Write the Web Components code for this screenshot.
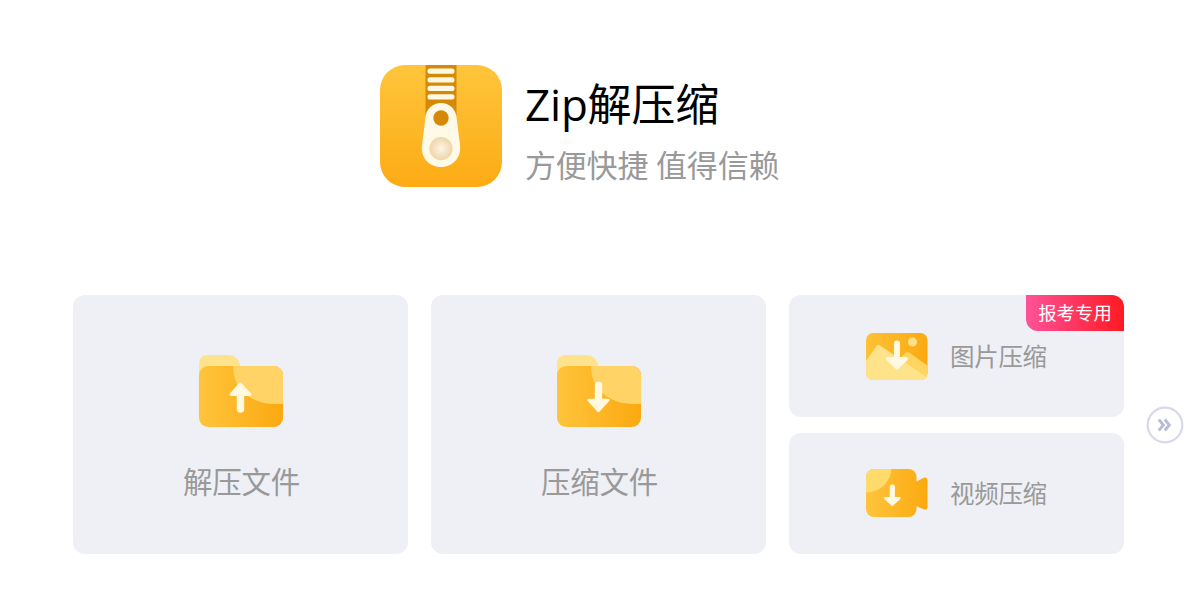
<!DOCTYPE html>
<html lang="zh-CN">
<head>
<meta charset="utf-8">
<title>Zip解压缩</title>
<style>
	body {
		margin: 0;
		background: #fff;
		font-family: "Open Sans", "Noto Sans CJK SC", sans-serif;
	}
</style>
</head>
<body>
<zip-home></zip-home>

<script>
	// drawings used by <zip-icon name="...">
	const icons = {
		logo: {
			width: 122, height: 122,
			body: `
				<defs>
					<linearGradient id="bg" x1="0" y1="0" x2="0" y2="1"><stop offset="0" stop-color="#ffc53c"/><stop offset="1" stop-color="#fcab14"/></linearGradient>
					<radialGradient id="knob"><stop offset="0" stop-color="#fcf5e6"/><stop offset="1" stop-color="#efd5a8"/></radialGradient>
				</defs>
				<rect width="122" height="122" rx="25" fill="url(#bg)"/>
				<rect x="45.5" width="31" height="50" fill="#d48a08"/>
				<g fill="#fff9e4">
					<rect x="47.5" y="3.6" width="27" height="5.2" rx="2.6"/>
					<rect x="47.5" y="12.3" width="27" height="5.2" rx="2.6"/>
					<rect x="47.5" y="20.8" width="27" height="5.2" rx="2.6"/>
					<rect x="47.5" y="29.3" width="27" height="5.2" rx="2.6"/>
				</g>
				<path d="M61 38C53 38 46.6 43.5 45.6 51.5L42 80C40.5 92.5 49 102 61 102C73 102 81.5 92.5 80 80L76.4 51.5C75.4 43.5 69 38 61 38Z" fill="#fff9e8"/>
				<circle cx="61" cy="53" r="7.7" fill="#d48a08"/>
				<circle cx="61" cy="83.6" r="11.6" fill="url(#knob)"/>`
		},
		extract: {
			width: 85, height: 73,
			body: folder('<path d="M41.8 27.6L52.3 38.7Q53 40.6 51 40.9H45.2V54.3Q45.2 57.7 41.5 57.7Q37.8 57.7 37.8 54.3V40.9H32Q30 40.6 30.7 38.7L40.5 27.6Q41.2 27 41.8 27.6Z" fill="#fff9e2"/>')
		},
		compress: {
			width: 85, height: 73,
			body: folder('<path d="M37.8 30Q37.8 26.8 41.5 26.8Q45.2 26.8 45.2 30V43.7H51Q53.4 44 52.3 46L42.2 57Q41.5 57.7 40.8 57L30.7 46Q29.6 44 32 43.7H37.8Z" fill="#fff9e2"/>')
		},
		image: {
			width: 62, height: 47,
			body: `
				<defs>
					<linearGradient id="bg"><stop offset="0" stop-color="#ffc136"/><stop offset="1" stop-color="#fba910"/></linearGradient>
					<clipPath id="clip"><rect width="61.5" height="47" rx="7"/></clipPath>
				</defs>
				<g clip-path="url(#clip)">
					<rect width="62" height="47" fill="url(#bg)"/>
					<path d="M20 37L40 19.5Q41.5 18.5 43 19.5L62 33V47H20Z" fill="#ffd561"/>
					<path d="M0 28L10.8 12.5Q12.3 11 14 12.4L62 45V47H0Z" fill="#ffe38a"/>
				</g>
				<circle cx="46.5" cy="9" r="4.5" fill="#ffe08a"/>
				<path d="M28 10Q28 7.4 31 7.4Q34 7.4 34 10V24H40Q43 24.5 41.5 27L32 36.2Q31 37 30 36.2L20.5 27Q19 24.5 22 24H28Z" fill="#fff9e2"/>`
		},
		video: {
			width: 62, height: 50,
			body: `
				<defs>
					<linearGradient id="bg" gradientUnits="userSpaceOnUse" x1="0" y1="0" x2="62" y2="0"><stop offset="0" stop-color="#ffc43c"/><stop offset="1" stop-color="#fba910"/></linearGradient>
					<clipPath id="clip"><rect width="50.5" height="48" rx="8"/></clipPath>
				</defs>
				<rect width="50.5" height="48" rx="8" fill="url(#bg)"/>
				<path d="M50 13L57.5 8.7Q61.5 7.5 61.5 11V38Q61.5 41.5 57.5 40.3L50 37Z" fill="url(#bg)"/>
				<circle cx="0.5" cy="-1.5" r="25" fill="#ffdb6c" clip-path="url(#clip)"/>
				<path d="M23.7 18Q23.7 15.4 26.3 15.4Q28.9 15.4 28.9 18V28H33.8Q35.4 28.4 34.3 30L27 36.8Q26.3 37.4 25.6 36.8L18.3 30Q17.2 28.4 18.8 28H23.7Z" fill="#fff9e2"/>`
		},
		more: {
			width: 38, height: 38,
			body: `
				<circle cx="19" cy="19" r="17.3" fill="#fff" stroke="#d7d9e8" stroke-width="2.2"/>
				<path d="M12.8 13.5L17.4 19L12.8 24.5M18.8 13.5L23.4 19L18.8 24.5" fill="none" stroke="#b7bbd4" stroke-width="2.8"/>`
		}
	};

	function folder(arrow) {
		return `
			<defs>
				<linearGradient id="bg"><stop offset="0" stop-color="#ffc43c"/><stop offset="1" stop-color="#fba910"/></linearGradient>
				<clipPath id="clip"><rect y="11" width="84" height="61" rx="9"/></clipPath>
			</defs>
			<path d="M0 22V9Q0 0 9 0H29Q38 0 41 9V22Z" fill="#ffe38c"/>
			<rect y="11" width="84" height="61" rx="9" fill="url(#bg)"/>
			<path d="M34.2 11C33 33 52 49 76 49H84V11Z" fill="#ffd365" clip-path="url(#clip)"/>
			${arrow}`;
	}

	class ZipIcon extends HTMLElement {
		constructor() {
			super();
			this.attachShadow({mode: 'open'});
		}

		connectedCallback() {
			const icon = icons[this.getAttribute('name')];
			this.shadowRoot.innerHTML = `
				<style>
					:host { display: block; flex: none; }
					svg { display: block; }
				</style>
				<svg width="${icon.width}" height="${icon.height}" viewBox="0 0 ${icon.width} ${icon.height}">${icon.body}</svg>`;
		}
	}

	class ZipHeader extends HTMLElement {
		constructor() {
			super();
			this.attachShadow({mode: 'open'}).innerHTML = `
				<style>
					:host {
						display: flex;
						gap: 23px;
						padding: 65px 0 0 380px;
						height: 230px;
						box-sizing: border-box;
					}
					.text { padding-top: 9px; white-space: nowrap; }
					.title {
						font-size: 44px;
						line-height: 60px;
						letter-spacing: -0.2px;
						color: #000;
					}
					.subtitle {
						margin-top: 7px;
						font-size: 31px;
						line-height: 48px;
						letter-spacing: -0.2px;
						color: #999;
					}
				</style>
				<zip-icon name="logo"></zip-icon>
				<div class="text">
					<div class="title"><slot name="title"></slot></div>
					<div class="subtitle"><slot name="subtitle"></slot></div>
				</div>`;
		}
	}

	class ZipCard extends HTMLElement {
		constructor() {
			super();
			this.attachShadow({mode: 'open'});
		}

		connectedCallback() {
			this.shadowRoot.innerHTML = `
				<style>
					:host {
						position: relative;
						display: flex;
						flex-direction: column;
						align-items: center;
						gap: 29px;
						box-sizing: border-box;
						padding: 60px 0 0 2px;
						border-radius: 12px;
						background: #eff0f5;
						color: #999;
						font-size: 29.5px;
						line-height: 50px;
						letter-spacing: -0.3px;
						white-space: nowrap;
					}
					:host([small]) {
						flex: 1;
						flex-direction: row;
						gap: 22px;
						padding: 2px 0 0 77px;
						font-size: 24.5px;
					}
				</style>
				<zip-icon name="${this.getAttribute('icon')}"></zip-icon>
				<div><slot></slot></div>
				<slot name="badge"></slot>`;
		}
	}

	class ZipBadge extends HTMLElement {
		constructor() {
			super();
			this.attachShadow({mode: 'open'}).innerHTML = `
				<style>
					:host {
						position: absolute;
						top: 0;
						right: 0;
						width: 98px;
						height: 36px;
						border-radius: 0 12px 0 12px;
						background: linear-gradient(90deg, #ff5299, #ff1a22);
						color: #fff;
						font-size: 18.4px;
						line-height: 35px;
						letter-spacing: 0;
						text-align: center;
					}
				</style>
				<slot></slot>`;
		}
	}

	class ZipHome extends HTMLElement {
		constructor() {
			super();
			this.attachShadow({mode: 'open'}).innerHTML = `
				<style>
					:host { display: block; height: 600px; overflow: hidden; }
					main {
						display: flex;
						align-items: center;
						padding: 65px 0 0 73px;
					}
					.cards {
						display: grid;
						grid-template-columns: repeat(3, 335px);
						gap: 23px;
						height: 259px;
					}
					.column {
						display: flex;
						flex-direction: column;
						gap: 16px;
					}
					.more { margin-left: 22px; }
				</style>
				<zip-header>
					<span slot="title">Zip解压缩</span>
					<span slot="subtitle">方便快捷 值得信赖</span>
				</zip-header>
				<main>
					<div class="cards">
						<zip-card icon="extract">解压文件</zip-card>
						<zip-card icon="compress">压缩文件</zip-card>
						<div class="column">
							<zip-card small icon="image">图片压缩<zip-badge slot="badge">报考专用</zip-badge></zip-card>
							<zip-card small icon="video">视频压缩</zip-card>
						</div>
					</div>
					<zip-icon class="more" name="more"></zip-icon>
				</main>`;
		}
	}

	customElements.define('zip-icon', ZipIcon);
	customElements.define('zip-header', ZipHeader);
	customElements.define('zip-card', ZipCard);
	customElements.define('zip-badge', ZipBadge);
	customElements.define('zip-home', ZipHome);
</script>
</body>
</html>
